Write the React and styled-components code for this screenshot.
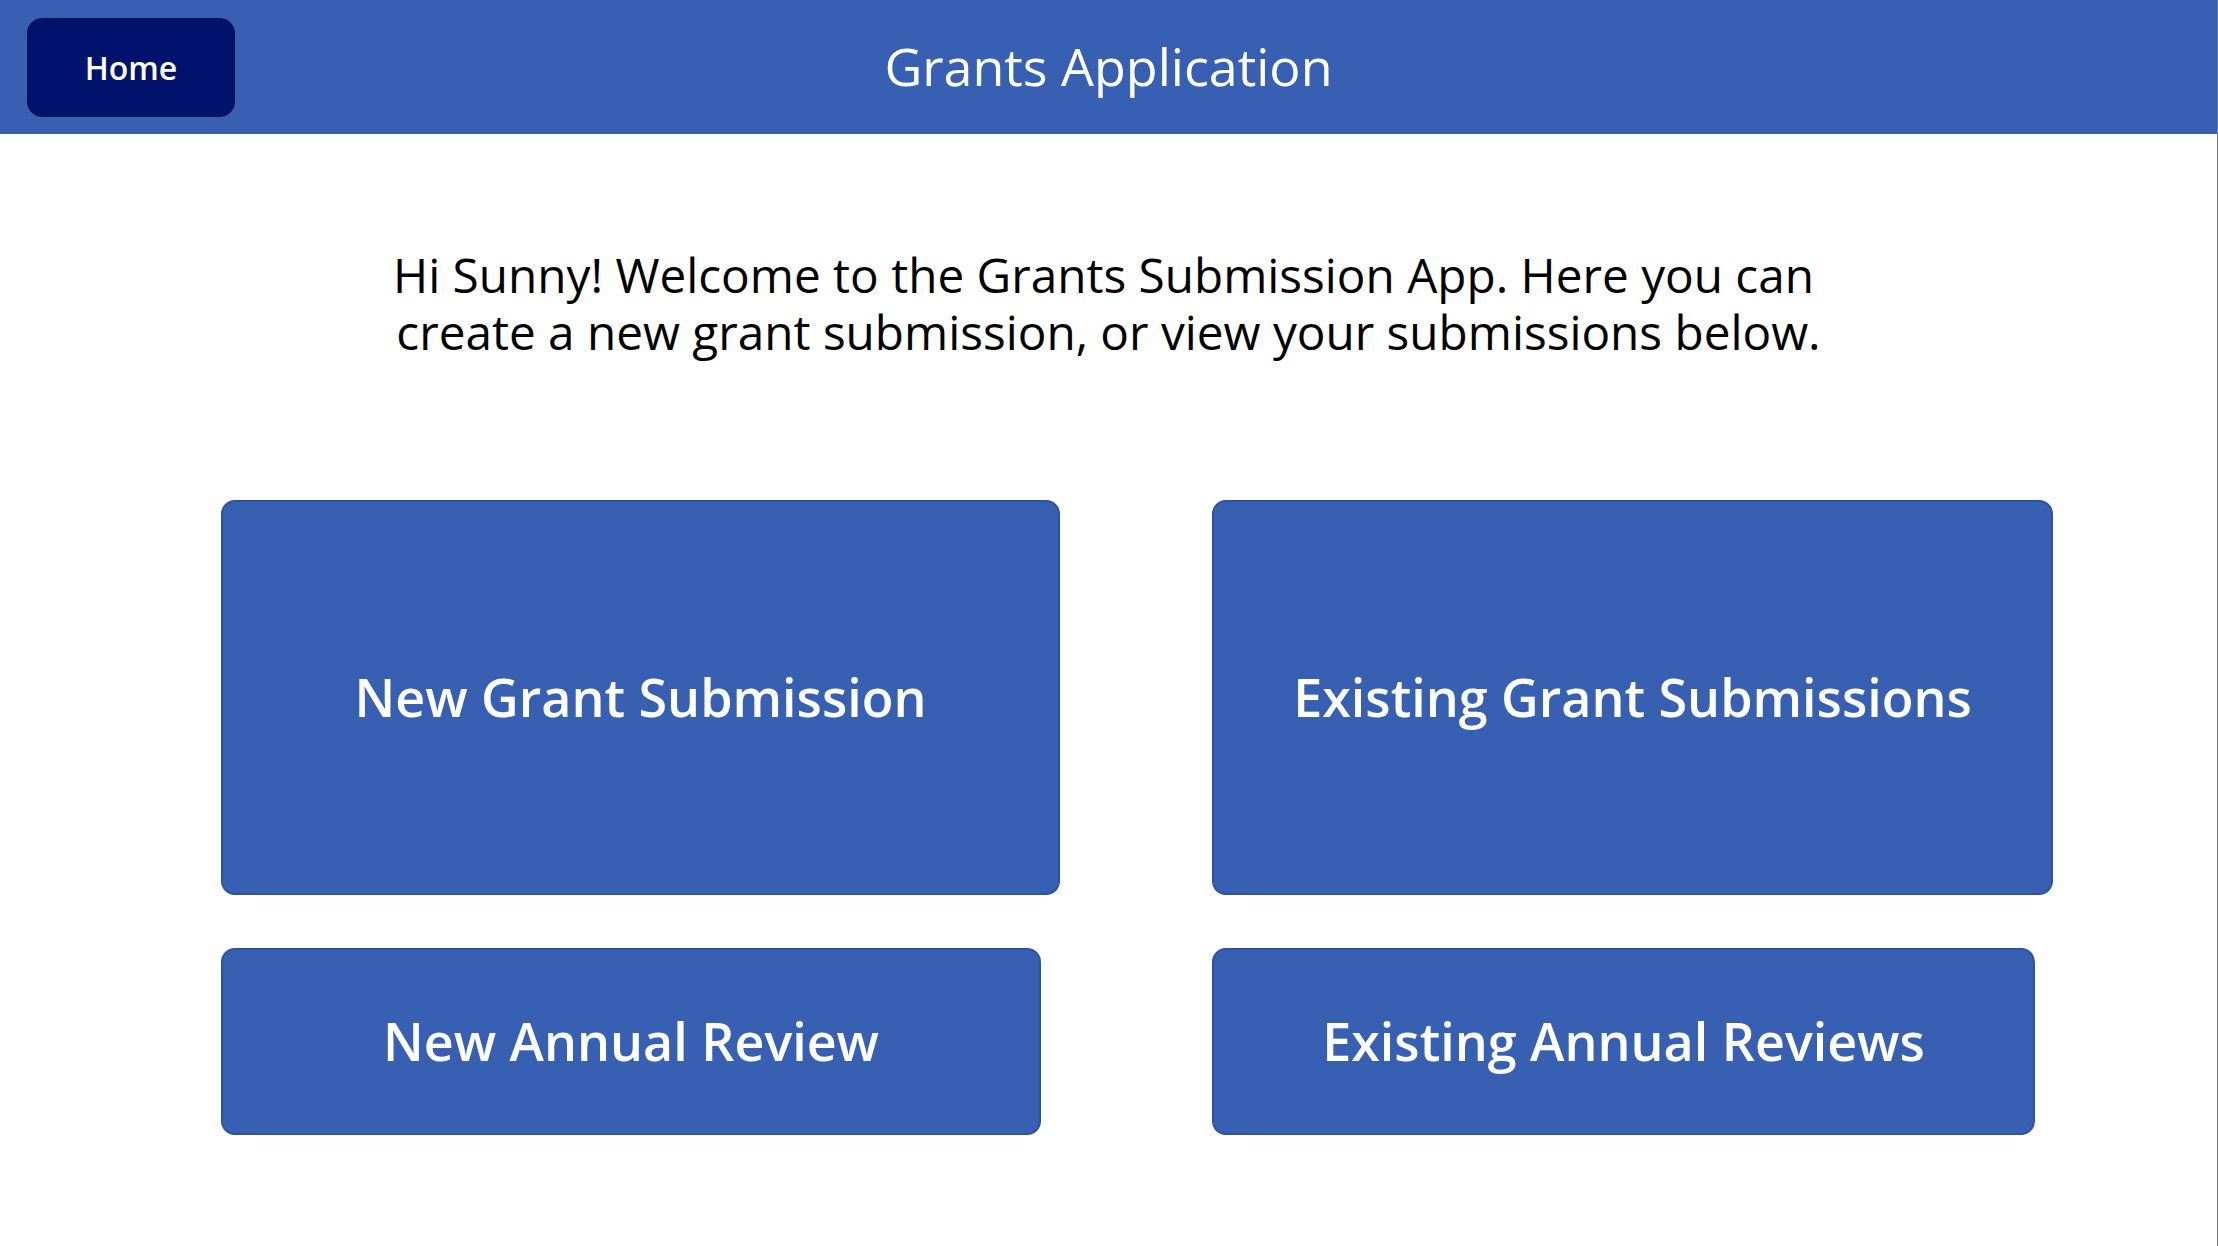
import styled, { createGlobalStyle } from "styled-components"

const GlobalStyle = createGlobalStyle`
  html, body {
    margin: 0;
    padding: 0;
    background: #ffffff;
  }
  body {
    font-family: "Open Sans", "Liberation Sans", sans-serif;
  }
`

const Screen = styled.div`
  width: 2217px;
  height: 1246px;
  border-right: 1px solid #7a7a7a;
  display: flex;
  flex-direction: column;
  background: #ffffff;
`

const Header = styled.header`
  height: 134px;
  background: #3860b2;
  display: grid;
  grid-template-columns: 1fr auto 1fr;
  align-items: center;
  padding: 0 27px;
  box-sizing: border-box;
`

const HomeButton = styled.button`
  width: 208px;
  height: 99px;
  background: #00126b;
  border: 1px solid #000e55;
  border-radius: 15px;
  color: #ffffff;
  font-family: "Open Sans", sans-serif;
  font-weight: 600;
  font-size: 32px;
  cursor: pointer;
  justify-self: start;
`

const Title = styled.h1`
  margin: 0;
  color: #ffffff;
  font-weight: 400;
  font-size: 52px;
  line-height: 1;
  padding-bottom: 2px;
`

const Content = styled.main`
  flex: 1;
  display: flex;
  flex-direction: column;
  align-items: center;
`

const Welcome = styled.p`
  margin: 112px 0 0;
  width: 1600px;
  text-align: center;
  color: #000000;
  font-size: 47.7px;
  line-height: 57px;
`

const Line = styled.span`
  display: block;
  margin-left: ${({ $shift }) => $shift || 0}px;
`

const CardGrid = styled.div`
  align-self: flex-start;
  margin: 140px 0 0 221px;
  display: grid;
  grid-template-columns: 839px 841px;
  column-gap: 152px;
  row-gap: 53px;
`

const Card = styled.button`
  width: ${({ $width }) => $width}px;
  height: ${({ $height }) => $height}px;
  background: #3860b2;
  border: 2px solid #2d52a0;
  border-radius: 14px;
  color: #ffffff;
  font-family: "Open Sans", sans-serif;
  font-weight: 600;
  font-size: 52px;
  cursor: pointer;
  padding: 0 0 3px;
`

const App = () => {
  return (
    <>
      <GlobalStyle />
      <Screen>
        <Header>
          <HomeButton>Home</HomeButton>
          <Title>Grants Application</Title>
          <span />
        </Header>
        <Content>
          <Welcome>
            <Line $shift={-10}>
              Hi Sunny! Welcome to the Grants Submission App. Here you can
            </Line>
            <Line>
              create a new grant submission, or view your submissions below.
            </Line>
          </Welcome>
          <CardGrid>
            <Card $width={839} $height={395}>New Grant Submission</Card>
            <Card $width={841} $height={395}>Existing Grant Submissions</Card>
            <Card $width={820} $height={187}>New Annual Review</Card>
            <Card $width={823} $height={187}>Existing Annual Reviews</Card>
          </CardGrid>
        </Content>
      </Screen>
    </>
  )
}

export default App
